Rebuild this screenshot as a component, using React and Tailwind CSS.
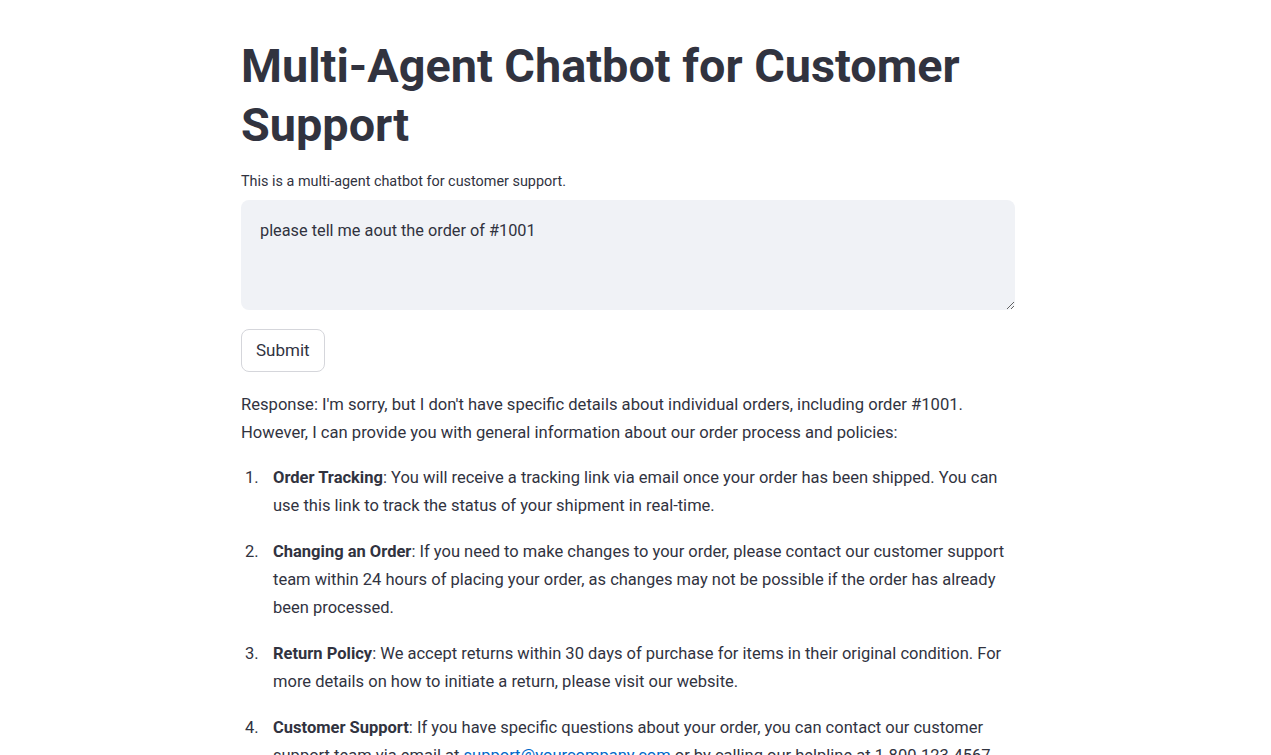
export default function App() {
  const items = [
    {
      title: 'Order Tracking',
      text: ': You will receive a tracking link via email once your order has been shipped. You can use this link to track the status of your shipment in real-time.',
    },
    {
      title: 'Changing an Order',
      text: ': If you need to make changes to your order, please contact our customer support team within 24 hours of placing your order, as changes may not be possible if the order has already been processed.',
    },
    {
      title: 'Return Policy',
      text: ': We accept returns within 30 days of purchase for items in their original condition. For more details on how to initiate a return, please visit our website.',
    },
  ];

  return (
    <div className="min-h-screen bg-white text-[#31333f] font-['Roboto',sans-serif]">
      <div className="ml-[241px] w-[774px] pt-[37px]">
        <h1 className="text-[46.8px] font-bold leading-[59px]">
          Multi-Agent Chatbot for Customer Support
        </h1>
        <p className="mt-[17px] text-[14.4px] leading-[20px]">
          This is a multi-agent chatbot for customer support.
        </p>
        <div className="mt-[8px]">
          <textarea
            className="block w-full h-[110px] resize-y rounded-[8px] bg-[#f0f2f6] px-[19px] py-[19px] text-[16.3px] leading-[24px] outline-none text-[#31333f]"
            defaultValue="please tell me aout the order of #1001"
          />
        </div>
        <button className="mt-[19px] h-[43px] px-[14px] rounded-[8px] border border-[#d5d6db] bg-white text-[17px]">
          Submit
        </button>
        <div className="mt-[19px] text-[16.6px] leading-[28px]">
          <p>
            Response: I'm sorry, but I don't have specific details about individual orders, including order #1001. However, I can provide you with general information about our order process and policies:
          </p>
          <ol className="mt-[17px] flex flex-col gap-[18px] text-[16.5px]">
            {items.map((it, i) => (
              <li key={it.title} className="flex">
                <span className="w-[32px] shrink-0 pl-[4px]">{i + 1}.</span>
                <span>
                  <span className="font-bold">{it.title}</span>
                  {it.text}
                </span>
              </li>
            ))}
            <li className="flex">
              <span className="w-[32px] shrink-0 pl-[4px]">4.</span>
              <span>
                <span className="font-bold">Customer Support</span>: If you have specific questions about your order, you can contact our customer support team via email at{' '}
                <a href="#" className="text-[#0068c9] underline">support@yourcompany.com</a> or by calling our helpline at 1-800-123-4567.
              </span>
            </li>
          </ol>
        </div>
      </div>
    </div>
  );
}
